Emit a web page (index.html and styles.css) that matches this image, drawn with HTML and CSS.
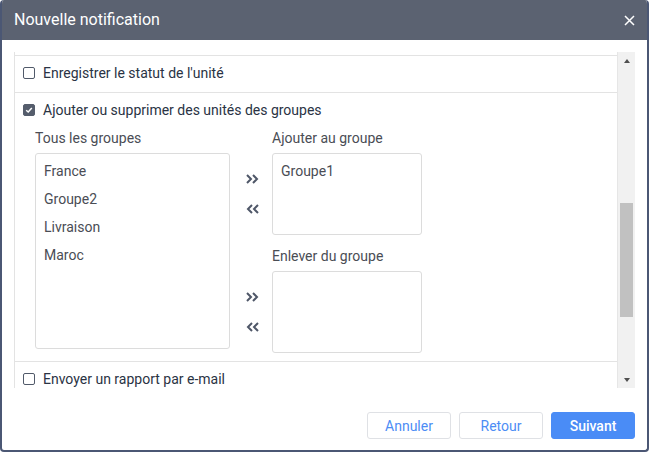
FILE: index.html
```html
<!DOCTYPE html>
<html lang="fr">

<head>
    <meta charset="UTF-8">
    <meta name="viewport" content="width=device-width, initial-scale=1.0">
    <title>Nouvelle notification</title>
    <link rel="stylesheet" href="styles.css">
</head>

<body>
    <div class="dialog">
        <div class="dialog-header">
            <span class="dialog-title">Nouvelle notification</span>
            <span class="close-btn">
                <svg width="11" height="11" viewBox="0 0 11 11">
                    <path d="M1 1 L10 10 M10 1 L1 10" stroke="#fff" stroke-width="1.5" fill="none" />
                </svg>
            </span>
        </div>
        <div class="dialog-body">
            <div class="scroll-box">
                <div class="scroll-content">
                    <div class="row-tail"></div>

                    <div class="row row-short">
                        <div class="check-line">
                            <span class="checkbox"></span>
                            Enregistrer le statut de l'unité
                        </div>
                    </div>

                    <div class="row row-groups">
                        <div class="check-line">
                            <span class="checkbox checked">
                                <svg width="8" height="8" viewBox="0 0 8 8">
                                    <path d="M1.2 4.2 L3.2 6 L6.8 2" stroke="#fff" stroke-width="1.5" fill="none" />
                                </svg>
                            </span>
                            Ajouter ou supprimer des unités des groupes
                        </div>

                        <div class="groups">
                            <div class="group-col">
                                <div class="group-label">Tous les groupes</div>
                                <div class="list-box list-tall">
                                    <div class="list-item">France</div>
                                    <div class="list-item">Groupe2</div>
                                    <div class="list-item">Livraison</div>
                                    <div class="list-item">Maroc</div>
                                </div>
                            </div>

                            <div class="group-side">
                                <div class="group-label side-label">Ajouter au groupe</div>
                                <div class="side-row">
                                    <div class="arrows">
                                        <svg width="13" height="10" viewBox="0 0 13 10">
                                            <path d="M1 1 L5 5 L1 9 M7 1 L11 5 L7 9" stroke="#4f5768" stroke-width="2" fill="none" />
                                        </svg>
                                        <svg width="13" height="10" viewBox="0 0 13 10">
                                            <path d="M6 1 L2 5 L6 9 M12 1 L8 5 L12 9" stroke="#4f5768" stroke-width="2" fill="none" />
                                        </svg>
                                    </div>
                                    <div class="list-box list-short">
                                        <div class="list-item">Groupe1</div>
                                    </div>
                                </div>

                                <div class="group-label side-label second">Enlever du groupe</div>
                                <div class="side-row">
                                    <div class="arrows">
                                        <svg width="13" height="10" viewBox="0 0 13 10">
                                            <path d="M1 1 L5 5 L1 9 M7 1 L11 5 L7 9" stroke="#4f5768" stroke-width="2" fill="none" />
                                        </svg>
                                        <svg width="13" height="10" viewBox="0 0 13 10">
                                            <path d="M6 1 L2 5 L6 9 M12 1 L8 5 L12 9" stroke="#4f5768" stroke-width="2" fill="none" />
                                        </svg>
                                    </div>
                                    <div class="list-box list-short"></div>
                                </div>
                            </div>
                        </div>
                    </div>

                    <div class="row">
                        <div class="check-line">
                            <span class="checkbox"></span>
                            Envoyer un rapport par e-mail
                        </div>
                    </div>
                </div>

                <div class="scrollbar">
                    <div class="sb-btn"><span class="tri-up"></span></div>
                    <div class="sb-track">
                        <div class="sb-thumb"></div>
                    </div>
                    <div class="sb-btn"><span class="tri-down"></span></div>
                </div>
            </div>
        </div>
        <div class="dialog-footer">
            <button class="btn">Annuler</button>
            <button class="btn">Retour</button>
            <button class="btn btn-primary">Suivant</button>
        </div>
    </div>
</body>

</html>
```

FILE: styles.css
```css
html,
body {
    margin: 0;
    padding: 0;
    background-color: #ffffff;
    font-family: Roboto, "Liberation Sans", sans-serif;
    font-size: 14px;
}

.dialog {
    width: 649px;
    height: 452px;
    box-sizing: border-box;
    border: 2px solid #4b5774;
    border-top: none;
    border-radius: 4px;
    background-color: #ffffff;
    overflow: hidden;
    display: flex;
    flex-direction: column;
}

.dialog-header {
    height: 40px;
    flex-shrink: 0;
    background-color: #5b6271;
    display: flex;
    align-items: center;
    justify-content: space-between;
    padding: 0 12px 0 12px;
}

.dialog-title {
    color: #ffffff;
    font-size: 16px;
    padding-bottom: 1px;
}

.close-btn {
    display: flex;
    width: 11px;
    height: 11px;
}

.dialog-body {
    padding: 12px 12px 0 12px;
}

.scroll-box {
    height: 336px;
    display: flex;
    overflow: hidden;
}

.scroll-content {
    flex: 1;
    border-left: 1px solid #e3e3e3;
    overflow: hidden;
    color: #2a3344;
}

.row-tail {
    height: 3px;
    border-bottom: 1px solid #e3e3e3;
}

.row {
    padding: 9px 0 11px 8px;
    border-bottom: 1px solid #e3e3e3;
}

.row-short {
    height: 16px;
}

.row-groups {
    padding-bottom: 8px;
}

.check-line {
    display: flex;
    align-items: center;
    line-height: 16px;
}

.checkbox {
    width: 12px;
    height: 12px;
    box-sizing: border-box;
    border: 1.5px solid #515a6a;
    border-radius: 2px;
    margin-right: 8px;
    display: flex;
    align-items: center;
    justify-content: center;
}

.checkbox.checked {
    background-color: #555d6c;
    border-color: #555d6c;
}

.groups {
    display: flex;
    margin: 12px 0 0 12px;
}

.group-col {
    width: 195px;
}

.group-label {
    line-height: 16px;
    margin-bottom: 7px;
    color: #4a4d55;
}

.side-label {
    padding-left: 42px;
}

.side-label.second {
    margin-top: 13px;
}

.list-box {
    box-sizing: border-box;
    border: 1px solid #dcdcdc;
    border-radius: 3px;
    padding: 3px 8px 0 8px;
    color: #4a4d55;
}

.list-tall {
    width: 195px;
    height: 196px;
}

.list-short {
    width: 150px;
    height: 82px;
}

.list-item {
    line-height: 28px;
}

.side-row {
    display: flex;
}

.arrows {
    width: 42px;
    display: flex;
    flex-direction: column;
    justify-content: center;
    align-items: center;
    gap: 20px;
    padding-left: 2px;
    box-sizing: border-box;
}

.arrows svg {
    display: block;
}

.scrollbar {
    width: 18px;
    box-sizing: border-box;
    border-left: 1px solid #e6e6e6;
    background-color: #f1f1f1;
    display: flex;
    flex-direction: column;
}

.sb-btn {
    height: 17px;
    display: flex;
    align-items: center;
    justify-content: center;
}

.tri-up {
    width: 0;
    height: 0;
    border-left: 3.5px solid transparent;
    border-right: 3.5px solid transparent;
    border-bottom: 4px solid #505050;
    margin-left: 1px;
}

.tri-down {
    width: 0;
    height: 0;
    border-left: 3.5px solid transparent;
    border-right: 3.5px solid transparent;
    border-top: 4px solid #505050;
    margin-left: 1px;
}

.sb-track {
    flex: 1;
    padding: 134px 2px 0 2px;
}

.sb-thumb {
    height: 114px;
    background-color: #c1c1c1;
}

.dialog-footer {
    display: flex;
    justify-content: flex-end;
    gap: 8px;
    padding: 24px 12px 0 12px;
}

.btn {
    width: 84px;
    height: 27px;
    box-sizing: border-box;
    border: 1px solid #dfe1e5;
    border-radius: 3px;
    background-color: #ffffff;
    color: #4c8df5;
    font-family: Roboto, "Liberation Sans", sans-serif;
    font-size: 14px;
    padding: 0;
}

.btn-primary {
    background-color: #4a8cf6;
    border-color: #4a8cf6;
    color: #ffffff;
    font-weight: 500;
}
```
